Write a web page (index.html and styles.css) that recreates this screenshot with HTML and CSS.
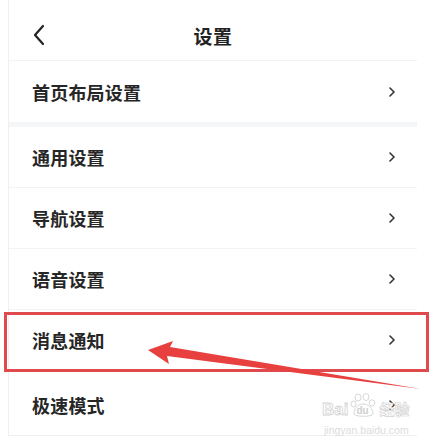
FILE: index.html
```html
<!DOCTYPE html>
<html lang="zh">
<head>
<meta charset="utf-8">
<link rel="stylesheet" href="styles.css">
</head>
<body>
<div class="page">
  <div class="panel">
    <header class="topbar">
      <svg class="back" width="12" height="22" viewBox="0 0 12 22"><path d="M10 2 L2 11 L10 20" fill="none" stroke="#222" stroke-width="2.2" stroke-linecap="round" stroke-linejoin="round"/></svg>
      <h1 class="title">设置</h1>
    </header>
    <ul class="list">
      <li class="row first"><span class="label">首页布局设置</span><svg class="chev" width="6" height="10" viewBox="0 0 6 10"><path d="M1 1 L5 5 L1 9" fill="none" stroke="#333" stroke-width="1.6" stroke-linecap="round" stroke-linejoin="round"/></svg></li>
      <li class="row"><span class="label">通用设置</span><svg class="chev" width="6" height="10" viewBox="0 0 6 10"><path d="M1 1 L5 5 L1 9" fill="none" stroke="#333" stroke-width="1.6" stroke-linecap="round" stroke-linejoin="round"/></svg></li>
      <li class="row"><span class="label">导航设置</span><svg class="chev" width="6" height="10" viewBox="0 0 6 10"><path d="M1 1 L5 5 L1 9" fill="none" stroke="#333" stroke-width="1.6" stroke-linecap="round" stroke-linejoin="round"/></svg></li>
      <li class="row"><span class="label">语音设置</span><svg class="chev" width="6" height="10" viewBox="0 0 6 10"><path d="M1 1 L5 5 L1 9" fill="none" stroke="#333" stroke-width="1.6" stroke-linecap="round" stroke-linejoin="round"/></svg></li>
      <li class="row"><span class="label">消息通知</span><svg class="chev" width="6" height="10" viewBox="0 0 6 10"><path d="M1 1 L5 5 L1 9" fill="none" stroke="#333" stroke-width="1.6" stroke-linecap="round" stroke-linejoin="round"/></svg></li>
      <li class="row last"><span class="label">极速模式</span><svg class="chev" width="6" height="10" viewBox="0 0 6 10"><path d="M1 1 L5 5 L1 9" fill="none" stroke="#333" stroke-width="1.6" stroke-linecap="round" stroke-linejoin="round"/></svg></li>
    </ul>
  </div>

  <div class="highlight"></div>
  <svg class="arrow" width="441" height="447" viewBox="0 0 441 447">
    <polygon points="148,350 173,341 170,347 421,389 167,356 169,364" fill="#e8403f"/>
  </svg>

  <div class="watermark">
    <div class="wm-top">
      <span class="wm-bai">Bai</span>
      <span class="wm-paw">
        <svg width="26" height="25" viewBox="0 0 26 25"><g fill="#fff" stroke="#d8d8d8" stroke-width="1"><ellipse cx="8" cy="4.5" rx="3" ry="3.5"/><ellipse cx="16" cy="4" rx="3" ry="3.5"/><ellipse cx="22" cy="10" rx="2.8" ry="3.2"/><ellipse cx="3.5" cy="11" rx="2.6" ry="3"/><path d="M4 21 C4 14 9 11 13 11 C18 11 23 15 23 21 C23 24 4 24 4 21 Z"/></g></svg>
        <span class="wm-du">du</span>
      </span>
      <span class="wm-jy">经验</span>
    </div>
    <div class="wm-url">jingyan.baidu.com</div>
  </div>
</div>
</body>
</html>
```

FILE: styles.css
```css
html, body {
  margin: 0;
  padding: 0;
  background: #ffffff;
}
body {
  font-family: "Noto Sans CJK SC", "Noto Sans", "Liberation Sans", sans-serif;
  color: #222222;
}
.page {
  position: relative;
  width: 441px;
  height: 447px;
  overflow: hidden;
}
.panel {
  margin-left: 8px;
  width: 409px;
  border-left: 1px solid #f0f0f0;
  box-sizing: border-box;
}
.topbar {
  position: relative;
  height: 60px;
  border-bottom: 1px solid #f1f2f3;
  display: flex;
  align-items: center;
  justify-content: center;
}
.back {
  position: absolute;
  left: 24px;
  top: 24px;
}
.title {
  margin: 10px 0 0 0;
  font-size: 19px;
  font-weight: 700;
  color: #222;
  line-height: 1;
  letter-spacing: 0.5px;
}
.list {
  list-style: none;
  margin: 0;
  padding: 0;
}
.row {
  height: 60px;
  border-bottom: 1px solid #f2f3f4;
  display: flex;
  align-items: center;
  justify-content: space-between;
  padding: 0 22px 0 23px;
}
.row.first {
  height: 61px;
  border-bottom: 5px solid #f5f6f7;
}
.row.last {
  height: 60px;
  padding-top: 4px;
  border-bottom: 1px solid #eeeff0;
}
.label {
  font-size: 18px;
  font-weight: 700;
  color: #262626;
  letter-spacing: 0.2px;
}
.chev {
  display: block;
}
.highlight {
  position: absolute;
  left: 4px;
  top: 312px;
  width: 425px;
  height: 60px;
  border: 3px solid #df4a4e;
  box-sizing: border-box;
}
.arrow {
  position: absolute;
  left: 0;
  top: 0;
}
.watermark {
  position: absolute;
  left: 322px;
  top: 393px;
  width: 100px;
  color: #ffffff;
  font-family: "Liberation Sans", sans-serif;
}
.wm-top {
  display: flex;
  align-items: flex-end;
  height: 26px;
  white-space: nowrap;
}
.wm-bai {
  font-size: 17px;
  font-weight: 700;
  line-height: 18px;
  -webkit-text-stroke: 0.8px #d4d4d4;
}
.wm-paw {
  position: relative;
  width: 26px;
  height: 26px;
  margin: 0 3px 0 2px;
}
.wm-paw svg {
  position: absolute;
  left: 0;
  top: 0;
}
.wm-du {
  position: absolute;
  left: 6px;
  top: 12px;
  font-size: 10px;
  font-weight: 700;
  color: #cfcfcf;
}
.wm-jy {
  font-family: "Noto Sans CJK SC", sans-serif;
  font-size: 15px;
  font-weight: 700;
  line-height: 20px;
  color: #fff;
  -webkit-text-stroke: 0.7px #d4d4d4;
}
.wm-url {
  margin-top: 5px;
  padding-left: 2px;
  font-size: 10.5px;
  line-height: 12px;
  color: #dcdcdc;
  white-space: nowrap;
}
```
